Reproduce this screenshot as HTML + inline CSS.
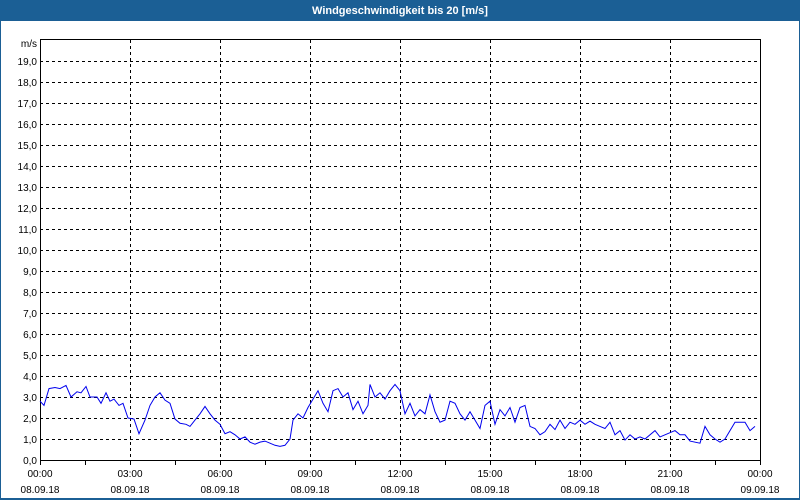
<!DOCTYPE html>
<html><head><meta charset="utf-8"><style>
html,body{margin:0;padding:0;width:800px;height:500px;overflow:hidden;background:#fff;font-family:"Liberation Sans",sans-serif}
</style></head><body>
<svg id="s" width="800" height="500" xmlns="http://www.w3.org/2000/svg" font-family="Liberation Sans, sans-serif" font-size="10" fill="#000">
<rect x="0" y="0" width="800" height="500" fill="#1b5f95"/>
<rect x="1" y="21" width="798" height="477" fill="#fff"/>
<text x="400" y="14" fill="#fff" font-weight="bold" font-size="11" text-anchor="middle">Windgeschwindigkeit bis 20 [m/s]</text>
<g id="grid"></g>
<rect x="40.5" y="39.5" width="720" height="421" fill="none" stroke="#000" stroke-width="1"/>
<polyline id="pl" fill="none" stroke="#0000ee" stroke-width="1"/>
</svg>
<script>
var s=document.getElementById('s'),g=document.getElementById('grid'),ns='http://www.w3.org/2000/svg';
function el(t,a,txt){var e=document.createElementNS(ns,t);for(var k in a)e.setAttribute(k,a[k]);if(txt)e.textContent=txt;g.appendChild(e);return e;}
for(var i=0;i<=19;i++){var y=460-i*21;
 if(i>0)el('line',{x1:40,x2:760,y1:y+0.5,y2:y+0.5,stroke:'#000','stroke-dasharray':'3,3'});
 el('text',{x:37,y:y+4,'text-anchor':'end'},i+',0');}
el('text',{x:37,y:47,'text-anchor':'end'},'m/s');
var times=['00:00','03:00','06:00','09:00','12:00','15:00','18:00','21:00','00:00'];
for(var j=0;j<=8;j++){var x=40+j*90;
 if(j>0&&j<8)el('line',{x1:x+0.5,x2:x+0.5,y1:40,y2:460,stroke:'#000','stroke-dasharray':'3,3'});
 el('text',{x:x,y:477,'text-anchor':'middle'},times[j]);
 el('text',{x:x,y:493,'text-anchor':'middle'},j==8?'09.09.18':'08.09.18');}
for(var k=0;k<=16;k++){var x=40+k*45;el('line',{x1:x+0.5,x2:x+0.5,y1:460,y2:465,stroke:'#000'});}
var d=[40,2.8,44,2.6,49,3.4,55,3.45,60,3.4,66,3.55,71,3.0,77,3.25,81,3.2,86,3.5,90,3.0,97,3.0,101,2.7,106,3.2,110,2.8,114,2.9,119,2.6,123,2.7,128,2.0,134,1.95,139,1.25,145,1.9,150,2.6,155,3.0,160,3.2,165,2.85,170,2.7,175,1.95,180,1.75,186,1.7,190,1.6,195,1.9,200,2.2,205,2.55,210,2.2,215,1.9,220,1.7,225,1.25,230,1.35,235,1.2,240,1.0,245,1.1,250,0.85,255,0.75,260,0.85,265,0.9,270,0.8,275,0.7,280,0.65,285,0.7,290,1.0,293,1.9,298,2.2,303,2.0,308,2.5,313,2.9,318,3.3,323,2.7,328,2.3,333,3.3,338,3.4,343,3.0,348,3.2,353,2.4,358,2.8,363,2.2,368,2.6,370,3.6,375,3.0,380,3.2,385,2.9,390,3.3,395,3.6,400,3.3,405,2.2,410,2.7,415,2.1,420,2.4,425,2.2,430,3.1,435,2.3,440,1.8,445,1.9,450,2.8,455,2.7,460,2.2,465,1.9,470,2.3,475,1.9,480,1.5,485,2.6,490,2.8,495,1.7,500,2.4,505,2.1,510,2.5,515,1.8,520,2.5,525,2.6,530,1.6,535,1.5,540,1.2,545,1.35,550,1.7,555,1.45,560,1.9,565,1.5,570,1.8,575,1.7,580,1.9,585,1.7,590,1.85,595,1.7,600,1.6,605,1.5,610,1.8,615,1.2,620,1.4,625,0.95,630,1.2,635,1.0,640,1.1,645,1.0,655,1.4,660,1.1,670,1.3,675,1.4,680,1.2,685,1.2,690,0.9,700,0.8,705,1.6,710,1.2,715,1.0,720,0.85,725,1.0,730,1.4,735,1.8,745,1.8,750,1.4,755,1.6];
var p=[];for(var i=0;i<d.length;i+=2)p.push(d[i]+','+(460-d[i+1]*21));
document.getElementById('pl').setAttribute('points',p.join(' '));
</script>
</body></html>
